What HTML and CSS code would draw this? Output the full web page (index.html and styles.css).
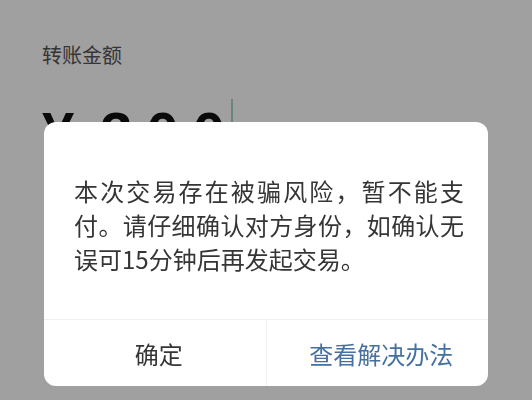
FILE: index.html
```html
<!DOCTYPE html>
<html lang="zh-CN">
<head>
    <meta charset="UTF-8">
    <meta name="viewport" content="width=device-width, initial-scale=1.0">
    <title>转账</title>
    <link rel="stylesheet" href="styles.css">
</head>
<body>
    <div class="page">
        <div class="label">转账金额</div>
        <div class="amount">
            <span class="currency">¥</span>
            <span class="digits">300</span>
            <span class="cursor"></span>
        </div>
    </div>

    <div class="mask">
        <div class="dialog">
            <p class="dialog-text">本次交易存在被骗风险，暂不能支付。请仔细确认对方身份，如确认无误可15分钟后再发起交易。</p>
            <div class="dialog-actions">
                <button type="button" class="btn">确定</button>
                <button type="button" class="btn btn-link">查看解决办法</button>
            </div>
        </div>
    </div>
</body>
</html>
```

FILE: styles.css
```css
body {
    margin: 0;
    font-family: "Noto Sans CJK SC", sans-serif;
    background-color: #fff;
}

.page {
    padding: 41px 0 0 42px;
    height: 400px;
    box-sizing: border-box;
}

.label {
    font-size: 20px;
    line-height: 28px;
    color: #555;
}

.amount {
    display: flex;
    align-items: center;
    margin-top: 30px;
    font-family: "Liberation Sans", Arial, sans-serif;
    font-weight: bold;
    font-size: 58px;
    line-height: 58px;
    color: #111;
}

.currency {
    margin-right: 26px;
}

.digits {
    letter-spacing: 14px;
}

.cursor {
    width: 2px;
    height: 68px;
    margin-left: -8px;
    background-color: #a3d9bd;
}

.mask {
    position: fixed;
    inset: 0;
    display: flex;
    justify-content: center;
    align-items: flex-start;
    padding-top: 122px;
    background-color: rgba(0, 0, 0, 0.373);
}

.dialog {
    width: 444px;
    background-color: #fff;
    border-radius: 12px;
    overflow: hidden;
}

.dialog-text {
    margin: 0;
    padding: 52px 24px 43px 30px;
    font-size: 24px;
    line-height: 34px;
    color: #353535;
    text-align: justify;
}

.dialog-actions {
    display: flex;
    border-top: 1px solid #efefef;
}

.btn {
    flex: 1;
    height: 66px;
    padding: 0 0 0 8px;
    border: none;
    background: none;
    font-family: inherit;
    font-size: 24px;
    color: #353535;
    cursor: pointer;
}

.btn + .btn {
    border-left: 1px solid #efefef;
}

.btn-link {
    color: #45709f;
}
```
